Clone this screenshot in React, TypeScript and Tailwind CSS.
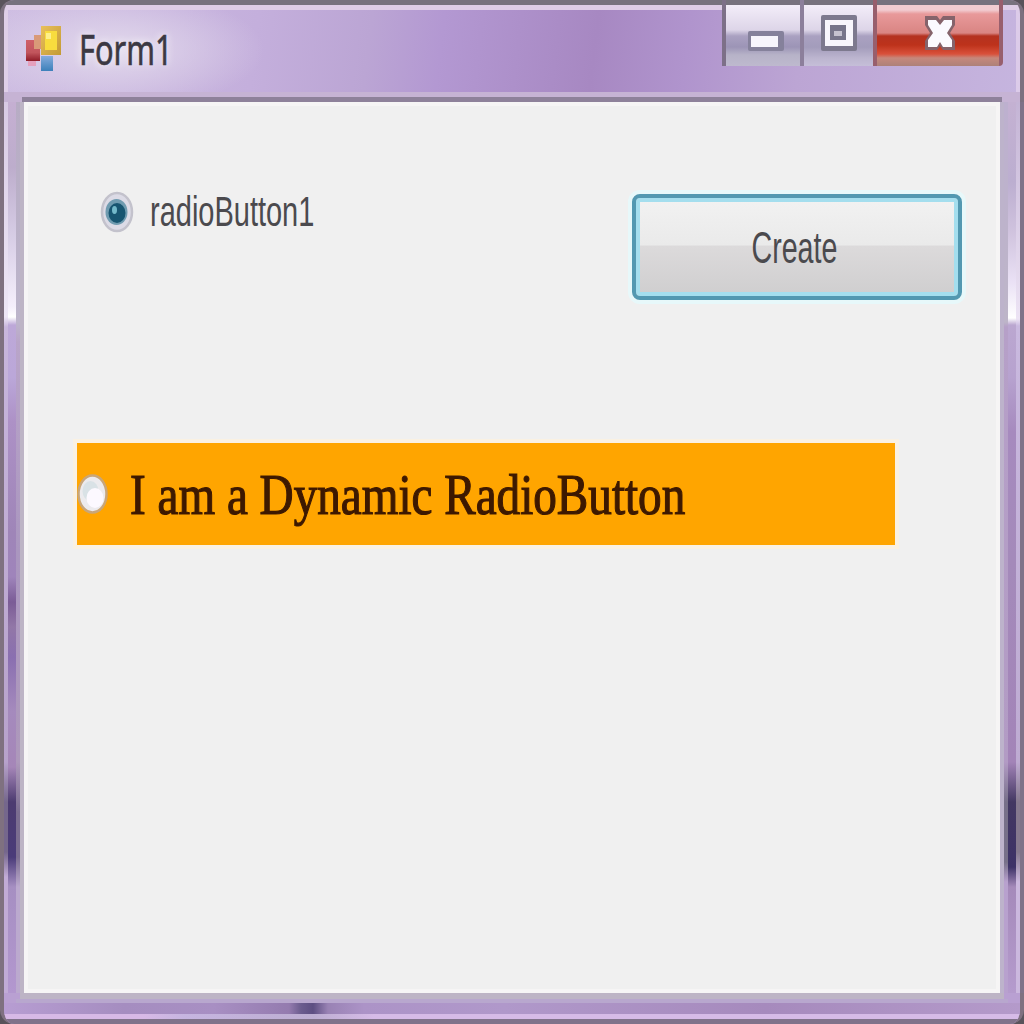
import type { ReactNode } from "react";

function FormIcon() {
  return (
    <svg className="h-[52px] w-[42px] shrink-0" viewBox="0 0 42 52">
      <defs>
        <linearGradient id="red" x1="0" y1="0" x2="0" y2="1">
          <stop offset="0" stopColor="#cf6068" />
          <stop offset="0.6" stopColor="#c1555c" />
          <stop offset="1" stopColor="#8f1c28" />
        </linearGradient>
        <linearGradient id="blue" x1="0" y1="0" x2="0" y2="1">
          <stop offset="0" stopColor="#84abdc" />
          <stop offset="1" stopColor="#3c80ba" />
        </linearGradient>
        <linearGradient id="yellow" x1="0" y1="0" x2="1" y2="1">
          <stop offset="0" stopColor="#e9c05a" />
          <stop offset="1" stopColor="#c39a34" />
        </linearGradient>
      </defs>
      <rect x="1" y="20" width="14" height="21" fill="url(#red)" />
      <rect x="9" y="15" width="10" height="14" fill="#d99a78" />
      <rect x="16" y="6" width="20" height="29" fill="url(#yellow)" />
      <rect x="20" y="11" width="12" height="19" fill="#f8dc3e" />
      <rect x="21" y="13" width="5" height="6" fill="#fdf08a" />
      <rect x="16" y="36" width="12" height="15" fill="url(#blue)" />
      <rect x="3" y="41" width="8" height="5" fill="#e5a0bd" />
    </svg>
  );
}

function MinimizeIcon() {
  return (
    <svg className="h-[20px] w-[36px]" viewBox="0 0 36 20">
      <rect x="0" y="0" width="36" height="20" rx="2" fill="#85819b" />
      <rect x="3" y="5" width="27" height="11" fill="#f7f5fc" />
    </svg>
  );
}

function MaximizeIcon() {
  return (
    <svg className="h-[36px] w-[36px]" viewBox="0 0 36 36">
      <rect width="36" height="36" rx="2" fill="#7d798e" />
      <rect x="4" y="5" width="28" height="26" fill="#f8f6fc" />
      <rect x="9" y="10" width="16" height="15" fill="#77758a" />
      <rect x="13" y="16" width="8" height="5" fill="#c5c2cf" />
    </svg>
  );
}

function CloseIcon() {
  return (
    <svg className="h-[38px] w-[32px]" viewBox="0 0 32 38">
      <path
        d="M1 2h12l3 4 3-4h12v9l-5 8 5 8v9H19l-3-4-3 4H1v-9l5-8-5-8z"
        fill="#85636b"
      />
      <path
        d="M4 6h8l4 5 4-5h8v5l-5 8 5 7v7h-9l-3-5-3 5H4v-7l5-7-5-8z"
        fill="#fbfaff"
      />
    </svg>
  );
}

function CaptionButtons() {
  return (
    <div className="flex h-[66px] shrink-0 border-l-4 border-[#7d7088]">
      <div className="flex w-[74px] justify-center bg-[linear-gradient(#77727e_0_5px,#f3edf9_5px,#ddd5e8_30px,#aaa1c1_36px,#9c94b6_47px,#b7b3c8_55px,#beb9ce_100%)] pt-[31px] pl-[5px]">
        <MinimizeIcon />
      </div>
      <div className="flex w-[73px] justify-center border-l-4 border-[#8c7f9b] bg-[linear-gradient(#77727e_0_5px,#f3edf9_5px,#ddd5e8_30px,#aaa1c1_36px,#a39cbb_47px,#bcb5cf_58px,#c5bed8_100%)] pt-[15px]">
        <MaximizeIcon />
      </div>
      <div className="flex w-[130px] justify-center rounded-br border-x-4 border-[#985f6d] bg-[linear-gradient(#77727e_0_5px,#f2ccd1_5px_10px,#e8999a_14px,#d98583_33px,#b43221_36px,#bd321b_45px,#d9513b_54px,#c6887c_58px,#ad8179_100%)] pt-[14px] pl-[3px]">
        <CloseIcon />
      </div>
    </div>
  );
}

function TitleBar() {
  return (
    <header className="flex h-[102px] shrink-0 flex-col rounded-t-[14px] border-x-4 border-[#7c707f] bg-[linear-gradient(#77727e_0_5px,#decde7_5px_10px,transparent_10px_92px,#c6b3d4_92px),linear-gradient(90deg,#dfcfe8_0_4px,transparent_4px_1012px,#dccbe9_1012px),radial-gradient(ellipse_150px_60px_at_110px_50px,#e2d9ec,transparent),linear-gradient(97deg,#cebde2_0%,#c4afdc_25%,#bba5d4_36%,#b398d2_43%,#a788c2_58%,#b094cd_67%,#bca5d4_78%,#c6b5df_100%)]">
      <div className="flex grow justify-between pr-[17px] pl-[21px]">
        <div className="flex pt-[20px]">
          <FormIcon />
          <span className="ml-[12px] w-[105px] origin-left scale-x-[0.75] pt-[4px] font-['Noto_Sans'] text-[41px] leading-[50px] whitespace-nowrap text-[#3c3943] [-webkit-text-stroke:0.6px_#3c3943] [text-shadow:0_0_10px_#fff]">
            Form1
          </span>
        </div>
        <CaptionButtons />
      </div>
      <div className="mx-[18px] h-[5px] bg-[#8e819a]" />
    </header>
  );
}

function LeftEdge() {
  return (
    <div className="flex w-6 shrink-0">
      <div className="w-1 bg-[#7f7180]" />
      <div className="w-1 bg-[linear-gradient(#d8cae4,#eee7f6_215px,#c8b6dc_225px,#b7a2cb_660px,#75678c_700px,#75678c_750px,#c1abd6_775px)]" />
      <div className="w-2 bg-[linear-gradient(#c5afd2,#bdadcc_65px,#d5cbe4_130px,#f5effc_205px,#fff_215px,#bda8d8_223px,#bba7d9_275px,#ad91c6_320px,#9f85b8_430px,#9f84bb_475px,#7b5c96_500px,#9277a7_525px,#8a6fb0_555px,#a58abd_610px,#a586b8_665px,#4c3b70_700px,#4a3b79_755px,#a68fc2_785px,#b397cf)]" />
      <div className="w-1 bg-[linear-gradient(#b7acc4,#bdb5cb_220px,#b9a5c9_240px,#aa96bf_450px,#ad98bb_660px,#7b6d90_710px,#7b6d90_755px,#bba9ce_785px)]" />
      <div className="w-1 bg-[#bdb4c5]" />
    </div>
  );
}

function RightEdge() {
  return (
    <div className="flex w-6 shrink-0">
      <div className="w-1 bg-[#bdb3cb]" />
      <div className="w-1 bg-[linear-gradient(#bdb0cf,#bdb5c8_220px,#b6a0c8_225px,#b29bc4_660px,#777089_700px,#777089_760px,#b8a1ce_780px)]" />
      <div className="w-2 bg-[linear-gradient(#c4b1d2,#bcaed0_80px,#d0c3de_130px,#eae1f5_180px,#fff_216px,#bba7d0_223px,#b7a2cf_275px,#a68abe_330px,#a48aba_460px,#a384b8_660px,#433862_700px,#3d3267_765px,#a58aba_785px,#b59bcd)]" />
      <div className="w-1 bg-[linear-gradient(#c4b4d5,#ece3f4_217px,#c9b9df_224px,#beabd2_660px,#85798e_700px,#85798e_750px,#cbb8de_780px)]" />
      <div className="w-1 bg-[#7f7288]" />
    </div>
  );
}

function BottomEdge() {
  return (
    <div className="flex h-[31px] shrink-0 flex-col overflow-hidden rounded-b-[14px] border-x-4 border-[#7f7180] bg-[#b9a0d2]">
      <div className="mx-4 h-[6px] bg-[#bdb4c5]" />
      <div className="mx-3 h-[4px] bg-[#b8a7ce]" />
      <div className="h-[11px] bg-[linear-gradient(90deg,#b79dd2,#a58dc0_120px,#a88fc3_210px,#947baf_285px,#6b5c8e_297px,#5d4e82_309px,#9982b4_324px,#ac93c7_360px,#b098ca_500px,#a68abd_75%,#b49aca)]" />
      <div className="h-[5px] bg-[linear-gradient(90deg,#d7b9e6_140px,#c6b5e0_180px,#bdaed2_310px,#d6bbe7_370px)]" />
      <div className="h-[5px] bg-[#80728a]" />
    </div>
  );
}

function Radio({ children, checked }: { children: ReactNode; checked?: boolean }) {
  return (
    <div className="flex h-[46px] items-center">
      {checked ? (
        <svg className="h-[44px] w-[34px]" viewBox="0 0 34 44">
          <ellipse cx="17" cy="22" rx="15" ry="19" fill="#dcdbe6" stroke="#c3c2cc" strokeWidth="2.5" />
          <ellipse cx="16.5" cy="22" rx="11" ry="13" fill="#6f9bb0" />
          <ellipse cx="17" cy="23" rx="8.5" ry="10" fill="#175571" />
          <ellipse cx="14.5" cy="20" rx="2.5" ry="4" fill="#73b9ca" />
        </svg>
      ) : (
        <svg className="h-[46px] w-[32px]" viewBox="0 0 32 46">
          <ellipse cx="15.5" cy="23" rx="14" ry="18.5" fill="#ecebee" stroke="#c9a678" strokeWidth="2.5" />
          <ellipse cx="13.5" cy="20" rx="8" ry="10" fill="#d9e2e6" />
          <ellipse cx="18" cy="27" rx="8.5" ry="10" fill="#fcf9ff" />
        </svg>
      )}
      {children}
    </div>
  );
}

function ClientArea() {
  return (
    <main className="flex grow flex-col bg-[#f0f0f0] shadow-[inset_0_0_0_4px_#f6f5f5]">
      <div className="flex items-start justify-between pt-[87px] pr-[38px] pl-[76px]">
        <Radio checked>
          <span className="ml-[16px] w-[170px] origin-left scale-x-[0.69] pb-[1px] font-['Liberation_Sans'] text-[42px] leading-[46px] whitespace-nowrap text-[#4b4a4e]">
            radioButton1
          </span>
        </Radio>
        <button className="mt-[5px] flex h-[106px] w-[330px] items-center justify-center rounded-[8px] border-4 border-[#5298b1] bg-[linear-gradient(#f2f2f2,#eaeaea_48%,#dcdadb_49%,#cfcecf)] shadow-[inset_0_0_0_4px_#a4deee,0_0_0_4px_#e7f8fa]">
          <span className="scale-x-[0.65] pt-[2px] pr-[8px] font-['Liberation_Sans'] text-[44px] leading-[48px] text-[#4b4a4e]">
            Create
          </span>
        </button>
      </div>
      <div className="mt-[143px] ml-[53px] h-[102px] w-[818px] bg-[#ffa500] pt-[28px] shadow-[0_0_0_4px_#faf1e2]">
        <Radio>
          <span className="ml-[21px] origin-left scale-x-[0.842] pt-[2px] font-['Liberation_Serif'] text-[56px] leading-[46px] whitespace-nowrap text-[#3d1900] [-webkit-text-stroke:1.2px_#3d1900]">
            I am a Dynamic RadioButton
          </span>
        </Radio>
      </div>
    </main>
  );
}

export default function App() {
  return (
    <div className="flex h-[1024px] w-[1024px] flex-col overflow-hidden bg-[#59535b]">
      <TitleBar />
      <div className="flex grow">
        <LeftEdge />
        <ClientArea />
        <RightEdge />
      </div>
      <BottomEdge />
    </div>
  );
}
